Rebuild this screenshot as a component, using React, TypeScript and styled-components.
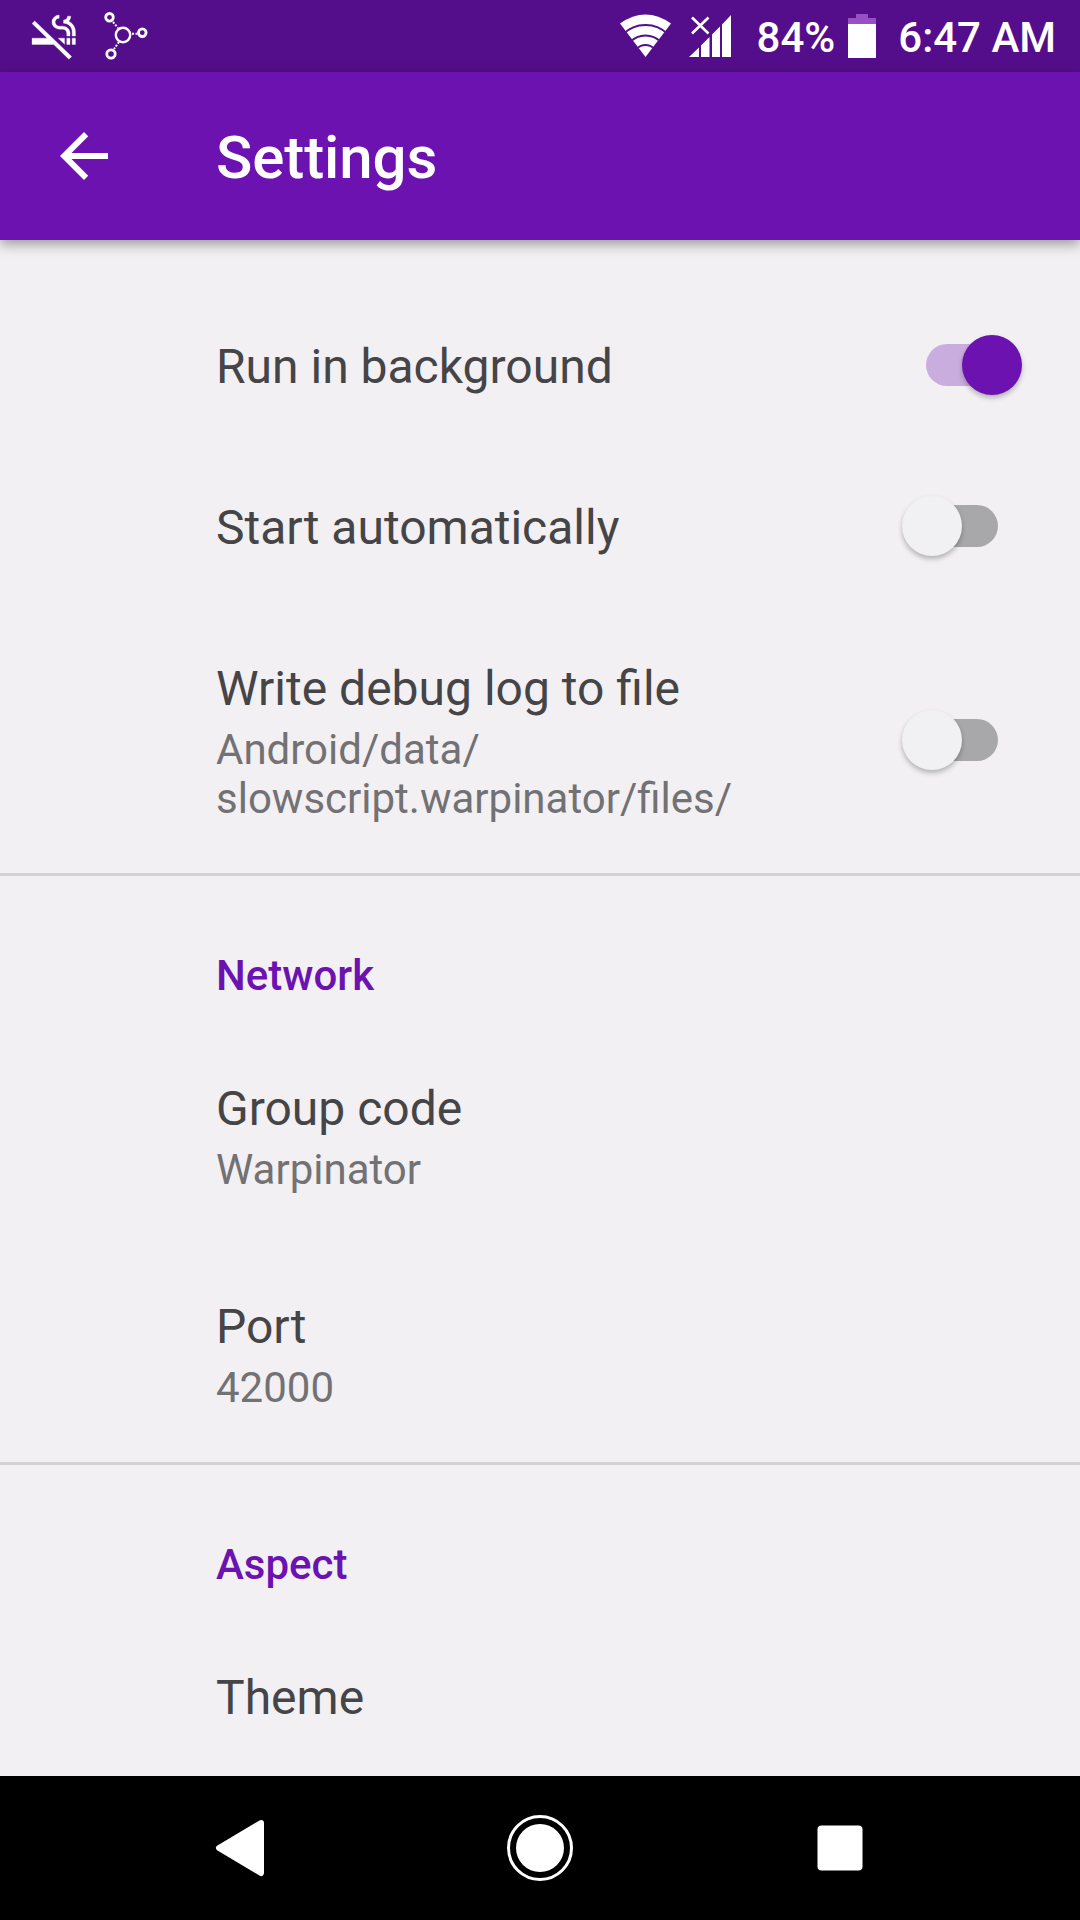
import React from "react";
import styled, { createGlobalStyle } from "styled-components";

const purple = "#6b12b1";

const GlobalStyle = createGlobalStyle`
  html, body { margin: 0; padding: 0; background: #f2f0f3; }
  * { box-sizing: border-box; }
`;

const Screen = styled.div`
  width: 1080px;
  height: 1920px;
  display: flex;
  flex-direction: column;
  overflow: hidden;
  background: #f2f0f3;
  font-family: Roboto, "Noto Sans", sans-serif;
`;

const StatusBar = styled.header`
  height: 72px;
  flex: none;
  display: flex;
  justify-content: space-between;
  background: #550e8b;
  color: #fff;
  padding-right: 24px;
`;

const StatusGroup = styled.div`
  display: flex;
  align-items: center;
`;

const StatusText = styled.span<{ $gap: number }>`
  font-size: 42px;
  font-weight: 500;
  line-height: 49px;
  margin-left: ${(p) => p.$gap}px;
  margin-top: 2px;
  white-space: nowrap;
`;

const Glyph = styled.svg`
  display: block;
  flex: none;
`;

const BatteryGlyph = styled(Glyph)`
  margin-left: 13px;
`;

const AppBar = styled.div`
  position: relative;
  height: 168px;
  flex: none;
  display: flex;
  align-items: center;
  padding-left: 48px;
  background: ${purple};
  box-shadow: 0 4px 12px rgba(0, 0, 0, 0.38);
`;

const BackButton = styled.button`
  width: 168px;
  height: 72px;
  padding: 0;
  border: 0;
  background: none;
`;

const AppTitle = styled.h1`
  margin: 4px 0 0;
  font-size: 60px;
  font-weight: 500;
  line-height: 70px;
  letter-spacing: -0.1px;
  color: #fff;
`;

const List = styled.main`
  flex: 1;
  min-height: 0;
  overflow: hidden;
  padding-top: 46px;
`;

const Row = styled.div`
  display: flex;
  align-items: center;
  justify-content: space-between;
  padding: 52px 82px 52px 216px;
`;

const RowTitle = styled.div`
  font-size: 48px;
  line-height: 57px;
  color: #454447;
  white-space: nowrap;
`;

const Summary = styled.div`
  margin-top: 8px;
  font-size: 42px;
  line-height: 49px;
  color: #727174;
  white-space: pre-line;
`;

const Category = styled.h2`
  height: 155px;
  margin: -2px 0 0;
  padding: 75px 0 0 216px;
  border-top: 3px solid #d3d1d5;
  font-size: 42px;
  font-weight: 500;
  line-height: 49px;
  color: ${purple};
`;

const Track = styled.div<{ $on: boolean }>`
  flex: none;
  width: 72px;
  height: 42px;
  margin-bottom: 4px;
  display: flex;
  align-items: center;
  justify-content: ${(p) => (p.$on ? "flex-end" : "flex-start")};
  border-radius: 21px;
  background: ${(p) => (p.$on ? "#c9addf" : "#a8a7a9")};
`;

const Thumb = styled.div<{ $on: boolean }>`
  flex: none;
  width: 60px;
  height: 60px;
  margin: ${(p) => (p.$on ? "0 -24px 0 0" : "0 0 0 -24px")};
  border-radius: 50%;
  background: ${(p) => (p.$on ? purple : "#f1f0f2")};
  box-shadow: 0 3px 5px rgba(0, 0, 0, 0.26);
`;

const NavBar = styled.nav`
  height: 144px;
  flex: none;
  display: flex;
  justify-content: center;
  gap: 228px;
  background: #000;
`;

const Switch = ({ on }: { on: boolean }) => (
  <Track $on={on} role="switch" aria-checked={on}>
    <Thumb $on={on} />
  </Track>
);

const Setting = ({ title, summary, on }: { title: string; summary?: string; on?: boolean }) => (
  <Row>
    <div>
      <RowTitle>{title}</RowTitle>
      {summary && <Summary>{summary}</Summary>}
    </div>
    {on !== undefined && <Switch on={on} />}
  </Row>
);

export default function App() {
  return (
    <>
      <GlobalStyle />
      <Screen>
        <StatusBar>
          <StatusGroup>
            <Glyph width="160" height="72" fill="none" stroke="#fff">
              <path
                transform="matrix(2.17 0 0 2.1 27.7 10.9)"
                fill="#fff"
                stroke="#fff"
                strokeWidth="0.15"
                d="M2 6l6.990 7H2v3h9.990l7 7 1.260-1.250-17-17zM20.500 13H22v3h-1.500zM18 13h1.500v3H18zM18.850 4.880c.62-.61 1-1.450 1-2.380h-1.500c0 1.020-.83 1.850-1.850 1.850v1.500c2.240 0 4 1.830 4 4.070V12H22V9.920c0-2.230-1.280-4.150-3.150-5.040zM14.500 8.700h1.530c1.050 0 1.970.74 1.970 2.050V12h1.500v-1.590c0-1.800-1.600-3.160-3.470-3.160H14.500c-1.020 0-1.850-.98-1.850-2s.83-1.750 1.850-1.750V2a3.350 3.350 0 0 0 0 6.700zM17 15.930V13h-2.930z"
              />
              <circle cx="123" cy="35" r="7.200" strokeWidth="2.400" />
              <circle cx="109.500" cy="17.300" r="3.800" strokeWidth="2.800" />
              <circle cx="142.300" cy="32.700" r="3.800" strokeWidth="2.800" />
              <circle cx="111" cy="54" r="4.200" strokeWidth="2.800" />
              <path d="M113 22l5 6M132 33.700h6M119 42l-5 7" strokeWidth="2" strokeDasharray="2 1.500" />
            </Glyph>
          </StatusGroup>
          <StatusGroup>
            <Glyph width="120" height="72" viewBox="615 0 120 72">
              <clipPath id="wifi"><path d="M645.500 57L618.500 22.500L620 10H671L672.500 22.500Z M645.500 57L619.500 23.500V10H671.500V23.500Z" /></clipPath>
              <path d="M645.500 57L620 23.500Q645.500 5.500 671 23.500Z" fill="#fff" stroke="none" />
              <g clipPath="url(#wifi)" fill="none" stroke="#550e8b" strokeWidth="2">
                <circle cx="645.500" cy="57" r="32" />
                <circle cx="645.500" cy="57" r="21.500" />
                <circle cx="645.500" cy="57" r="12" />
              </g>
              <path d="M689 57L699 47.500V57ZM701 57V45.500L709.500 37V57ZM712 57V34.500L720 26.500V57ZM722 57V24.500L731 15V57Z" fill="#fff" />
              <path d="M692 17.500L708.500 33.500M708.500 17.500L692 33.500" stroke="#fff" strokeWidth="2.600" />
            </Glyph>
            <StatusText $gap={22}>84%</StatusText>
            <BatteryGlyph width="28" height="72">
              <path d="M0 24V18H8V14H20V18H28V24Z" fill="#984fc4" />
              <path d="M0 24H28V58H0Z" fill="#fff" />
            </BatteryGlyph>
            <StatusText $gap={22}>6:47 AM</StatusText>
          </StatusGroup>
        </StatusBar>
        <AppBar>
          <BackButton aria-label="Back">
            <Glyph width="72" height="72" viewBox="0 0 24 24" fill="#fff">
              <path d="M20 11H7.830l5.590-5.590L12 4l-8 8 8 8 1.410-1.410L7.830 13H20v-2z" />
            </Glyph>
          </BackButton>
          <AppTitle>Settings</AppTitle>
        </AppBar>
        <List>
          <Setting title="Run in background" on={true} />
          <Setting title="Start automatically" on={false} />
          <Setting title="Write debug log to file" summary={"Android/data/\nslowscript.warpinator/files/"} on={false} />
          <Category>Network</Category>
          <Setting title="Group code" summary="Warpinator" />
          <Setting title="Port" summary="42000" />
          <Category>Aspect</Category>
          <Setting title="Theme" />
        </List>
        <NavBar>
          <Glyph width="72" height="144" viewBox="204 1776 72 144">
            <path d="M261 1823L219 1848L261 1873Z" fill="#fff" stroke="#fff" strokeWidth="6" strokeLinejoin="round" />
          </Glyph>
          <Glyph width="72" height="144" viewBox="504 1776 72 144">
            <circle cx="540" cy="1848" r="31.500" fill="none" stroke="#fff" strokeWidth="3" />
            <circle cx="540" cy="1848" r="24" fill="#fff" />
          </Glyph>
          <Glyph width="72" height="144" viewBox="804 1776 72 144">
            <rect x="817.500" y="1825.500" width="45" height="45" rx="4" fill="#fff" />
          </Glyph>
        </NavBar>
      </Screen>
    </>
  );
}
